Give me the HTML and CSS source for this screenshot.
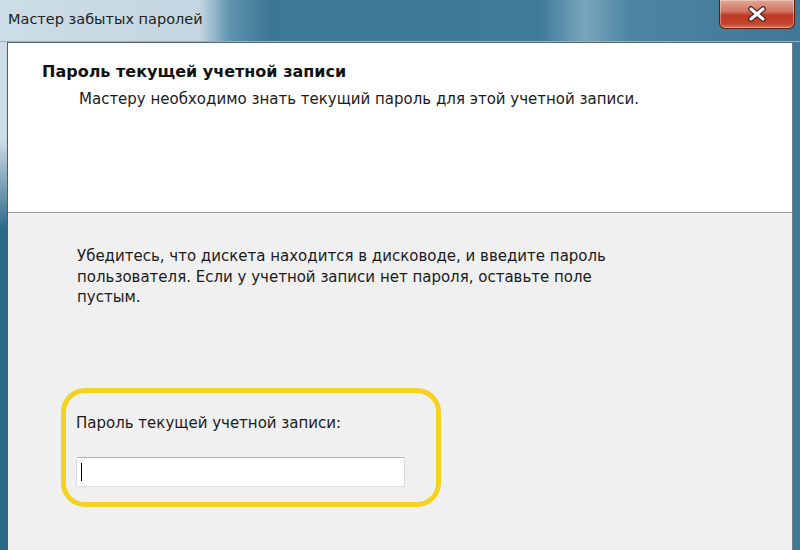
FILE: index.html
```html
<!DOCTYPE html>
<html lang="ru">
<head>
  <meta charset="UTF-8">
  <title>Мастер забытых паролей</title>
  <link rel="stylesheet" href="styles.css">
</head>
<body>
  <div class="window">
    <div class="titlebar">
      <span class="caption">Мастер забытых паролей</span>
      <button class="close" title="Закрыть">
        <svg width="22" height="16" viewBox="0 0 22 16">
          <path d="M5 3 L17 13 M17 3 L5 13" stroke="#3a1a14" stroke-width="5.5" stroke-linecap="round"/>
          <path d="M5 3 L17 13 M17 3 L5 13" stroke="#ffffff" stroke-width="3.2" stroke-linecap="round"/>
        </svg>
      </button>
    </div>

    <div class="client">
      <div class="header">
        <h1>Пароль текущей учетной записи</h1>
        <p class="subtitle">Мастеру необходимо знать текущий пароль для этой учетной записи.</p>
      </div>

      <div class="content">
        <p class="info">Убедитесь, что дискета находится в дисководе, и введите пароль<br>пользователя. Если у учетной записи нет пароля, оставьте поле<br>пустым.</p>

        <div class="highlight">
          <label class="label">Пароль текущей учетной записи:</label>
          <div class="field"><span class="caret"></span></div>
        </div>
      </div>
    </div>
  </div>
</body>
</html>
```

FILE: styles.css
```css
html, body {
  margin: 0;
  padding: 0;
}
body {
  width: 800px;
  height: 550px;
  overflow: hidden;
  font-family: "DejaVu Sans", Verdana, sans-serif;
  color: #1b1b1b;
}
.window {
  display: flex;
  flex-direction: column;
  height: 550px;
  background:
    linear-gradient(to bottom, rgba(43,104,136,0) 0, rgba(43,104,136,0) 140px, #2b6888 230px, #2d6a8a 100%) left top / 8px 100% no-repeat,
    linear-gradient(to right, #cddde7 0, #c4d6e1 200px, #5f93ae 230px, #3c7795 270px, #3f7b99 540px, #7aa6bb 585px, #4b85a2 630px, #3f7897 100%);
}
.titlebar {
  height: 42px;
  display: flex;
  justify-content: space-between;
  align-items: flex-start;
  padding-left: 8px;
  box-sizing: border-box;
  border-bottom: 1px solid #8fb1c3;
}
.caption {
  margin-top: 11px;
  font-size: 14.5px;
  color: #222;
}
.close {
  width: 76px;
  height: 29px;
  margin-right: 5px;
  padding: 0;
  border: 1px solid #5c2218;
  border-top: none;
  border-radius: 0 0 6px 6px;
  background: linear-gradient(to bottom, #e2a696 0, #d27561 40%, #bd3a24 55%, #c5452d 85%, #d8735d 100%);
  box-shadow: inset 0 0 0 1px rgba(255,255,255,0.35);
  display: flex;
  align-items: center;
  justify-content: center;
}
.client {
  flex: 1;
  margin: 0 7px 0 7px;
  border-left: 1px solid #4d5e6a;
  border-right: 1px solid #6d7f8a;
  border-top: 1px solid #5a6b76;
  display: flex;
  flex-direction: column;
  background-color: #f0f0f0;
}
.header {
  height: 170px;
  box-sizing: border-box;
  background-color: #ffffff;
  border-bottom: 1px solid #a0a0a0;
  padding: 19px 0 0 34px;
}
h1 {
  margin: 0;
  font-size: 16px;
  line-height: 20px;
  font-weight: bold;
  color: #111;
}
.subtitle {
  margin: 7px 0 0 37px;
  font-size: 15px;
  line-height: 20px;
}
.content {
  flex: 1;
  padding: 33px 0 0 69px;
}
.info {
  margin: 0;
  font-size: 15px;
  line-height: 20.5px;
}
.highlight {
  width: 380px;
  margin: 80px 0 0 -16px;
  padding: 20px 0 15px 10px;
  border: 5px solid #f4d223;
  border-radius: 24px;
  box-sizing: border-box;
  height: 119px;
}
.label {
  display: block;
  font-size: 15px;
  line-height: 20px;
}
.field {
  margin-top: 24px;
  width: 329px;
  height: 30px;
  box-sizing: border-box;
  background-color: #fff;
  border: 1px solid #d7dee6;
  border-top-color: #a7b3bf;
  border-radius: 2px;
  display: flex;
  align-items: center;
  padding-left: 4px;
}
.caret {
  width: 1px;
  height: 18px;
  background-color: #000;
}
```
